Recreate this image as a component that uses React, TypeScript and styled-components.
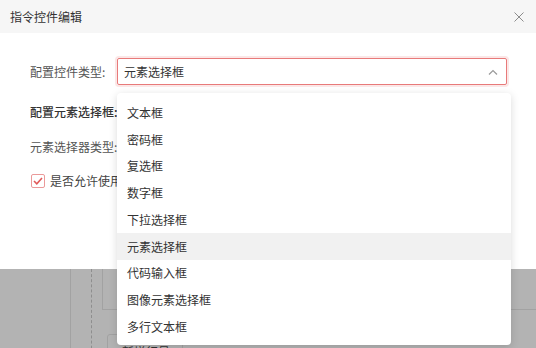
import React from 'react';
import styled, { createGlobalStyle } from 'styled-components';

const options = [
  '文本框',
  '密码框',
  '复选框',
  '数字框',
  '下拉选择框',
  '元素选择框',
  '代码输入框',
  '图像元素选择框',
  '多行文本框',
];

const GlobalStyle = createGlobalStyle`
  body {
    margin: 0;
    font-family: "Noto Sans CJK SC", "Noto Sans", sans-serif;
    font-size: 12px;
    color: #333;
  }
`;

const App = () => {
  const selected = '元素选择框';

  return (
    <Screen>
      <GlobalStyle />
      <Dialog>
        <Header>
          <Title>指令控件编辑</Title>
          <Close aria-label="close">
            <svg width="10" height="10" viewBox="0 0 10 10">
              <path d="M0.5 0.5L9.5 9.5M9.5 0.5L0.5 9.5" stroke="#8c8c8c" strokeWidth="1" />
            </svg>
          </Close>
        </Header>
        <Body>
          <Row $top={0}>
            <Label>配置控件类型:</Label>
            <SelectWrap>
              <Select>
                <span>{selected}</span>
                <svg width="10" height="6" viewBox="0 0 10 6">
                  <path d="M1 5.5L5 1.5L9 5.5" stroke="#999" strokeWidth="1.2" fill="none" />
                </svg>
              </Select>
              <Dropdown>
                {options.map((o) => (
                  <Option key={o} $active={o === selected}>
                    {o}
                  </Option>
                ))}
              </Dropdown>
            </SelectWrap>
          </Row>
          <Row $top={13}>
            <Label $strong>配置元素选择框:</Label>
          </Row>
          <Row $top={8}>
            <Label>元素选择器类型:</Label>
          </Row>
          <Row $top={7}>
            <Check>
              <svg width="10" height="8" viewBox="0 0 10 8">
                <path d="M1 4L3.8 6.8L9 1" stroke="#e05a5a" strokeWidth="1.6" fill="none" />
              </svg>
            </Check>
            <CheckText>是否允许使用自定义选择器</CheckText>
          </Row>
        </Body>
      </Dialog>
      <Backdrop>
        <Rail>
          <DashedRail>
            <Panel />
            <AddButton>新增行号</AddButton>
          </DashedRail>
        </Rail>
      </Backdrop>
    </Screen>
  );
};

const Screen = styled.div`
  width: 536px;
  height: 348px;
  overflow: hidden;
  display: flex;
  flex-direction: column;
  background: #fff;
`;
const Dialog = styled.div`
  display: flex;
  flex-direction: column;
  position: relative;
  z-index: 2;
`;
const Header = styled.div`
  height: 33px;
  background: #f6f6f6;
  display: flex;
  align-items: center;
  justify-content: space-between;
  padding: 0 12px 0 10px;
`;
const Title = styled.span`
  font-size: 12px;
  color: #333;
`;
const Close = styled.span`
  display: flex;
  width: 10px;
  height: 10px;
`;
const Body = styled.div`
  height: 236px;
  box-sizing: border-box;
  padding: 25px 0 0 30px;
  background: #fff;
  display: flex;
  flex-direction: column;
`;
const Row = styled.div<{ $top: number }>`
  height: 27px;
  margin-top: ${(p) => p.$top}px;
  display: flex;
  align-items: center;
`;
const Label = styled.span<{ $strong?: boolean }>`
  width: 87px;
  flex-shrink: 0;
  white-space: nowrap;
  color: ${(p) => (p.$strong ? '#333' : '#555')};
  font-weight: ${(p) => (p.$strong ? 500 : 400)};
`;
const SelectWrap = styled.div`
  position: relative;
  width: 390px;
`;
const Select = styled.div`
  height: 27px;
  box-sizing: border-box;
  border: 1px solid #e87a7a;
  border-radius: 2px;
  box-shadow: 0 0 0 2px rgba(232, 122, 122, 0.18);
  display: flex;
  align-items: center;
  justify-content: space-between;
  padding: 0 8px 0 6px;
  color: #333;
`;
const Dropdown = styled.ul`
  position: absolute;
  left: 0;
  top: 35px;
  width: 394px;
  margin: 0;
  padding: 6px 0 5px;
  list-style: none;
  background: #fff;
  border-radius: 4px;
  box-shadow: 0 2px 8px rgba(0, 0, 0, 0.15);
  z-index: 5;
`;
const Option = styled.li<{ $active?: boolean }>`
  height: 26.75px;
  display: flex;
  align-items: center;
  padding-left: 10px;
  color: #333;
  background: ${(p) => (p.$active ? '#f1f1f1' : 'transparent')};
`;
const Check = styled.span`
  width: 14px;
  height: 14px;
  box-sizing: border-box;
  margin-left: 1px;
  border: 1px solid #eb9a9a;
  border-radius: 2px;
  background: #fff;
  display: flex;
  align-items: center;
  justify-content: center;
`;
const CheckText = styled.span`
  margin-left: 5px;
  color: #444;
  white-space: nowrap;
`;
const Backdrop = styled.div`
  flex: 1;
  background: #b3b3b3;
  padding-left: 70px;
  display: flex;
`;
const Rail = styled.div`
  border-left: 1px solid #a2a2a2;
  padding-left: 20px;
  flex: 1;
  display: flex;
`;
const DashedRail = styled.div`
  border-left: 1px dashed #8e8e8e;
  padding-left: 10px;
  flex: 1;
  display: flex;
  flex-direction: column;
`;
const Panel = styled.div`
  height: 40px;
  border-left: 1px solid #a2a2a2;
  border-bottom: 1px solid #a2a2a2;
`;
const AddButton = styled.div`
  width: 76px;
  height: 30px;
  margin: 24px 0 0 5px;
  box-sizing: border-box;
  border: 1px solid #a2a2a2;
  border-radius: 3px;
  padding: 8px 0 0 14px;
  color: #333;
`;

export default App;
